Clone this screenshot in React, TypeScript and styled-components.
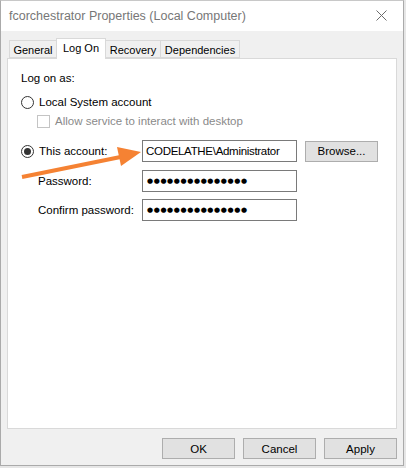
import React, {FC} from 'react';
import styled, {createGlobalStyle} from 'styled-components';

const GlobalStyle = createGlobalStyle`
    html, body {
        margin: 0;
        padding: 0;
        background: #e6e6e6;
    }
    body {
        font-family: "Liberation Sans", Arial, sans-serif;
        font-size: 11px;
        color: #000;
    }
`;

interface TabInfo {
    label: string;
    width: number;
}

const tabs: TabInfo[] = [
    {label: 'General', width: 48},
    {label: 'Log On', width: 50},
    {label: 'Recovery', width: 56},
    {label: 'Dependencies', width: 80},
];

const ACTIVE_TAB = 'Log On';

const Window = styled.div`
    position: relative;
    width: 404px;
    height: 466px;
    box-sizing: border-box;
    border: 1px solid #aaaaaa;
    border-top-color: #c8c8c8;
    background: #f0f0f0;
    display: flex;
    flex-direction: column;
`;

const TitleBar = styled.div`
    height: 30px;
    background: #fff;
    display: flex;
    align-items: center;
    justify-content: space-between;
    padding: 0 8px 0 8px;
    color: #777;
    font-size: 12.5px;
`;

const CloseButton = styled.svg`
    width: 11px;
    height: 11px;
    margin-right: 8px;
    margin-top: -1px;
`;

const Body = styled.div`
    flex: 1;
    padding: 7px 6px 0 6px;
    display: flex;
    flex-direction: column;
`;

const TabStrip = styled.div`
    display: flex;
    align-items: flex-end;
    height: 20px;
    padding-left: 3px;
`;

const Tab = styled.div<{ $active?: boolean; $width: number }>`
    position: relative;
    z-index: ${p => (p.$active ? 2 : 1)};
    box-sizing: border-box;
    width: ${p => p.$width}px;
    height: ${p => (p.$active ? 21 : 18)}px;
    margin-bottom: ${p => (p.$active ? -1 : 0)}px;
    margin-left: -1px;
    border: 1px solid #d9d9d9;
    border-bottom: ${p => (p.$active ? 'none' : '1px solid #d9d9d9')};
    background: ${p => (p.$active ? '#fff' : '#f0f0f0')};
    display: flex;
    align-items: ${p => (p.$active ? 'flex-start' : 'center')};
    justify-content: center;
    padding-top: ${p => (p.$active ? 3 : 1)}px;
    font-size: 11px;
    white-space: nowrap;
`;

const Panel = styled.div`
    position: relative;
    z-index: 1;
    height: 371px;
    box-sizing: border-box;
    background: #fff;
    border: 1px solid #d9d9d9;
    padding: 12px 0 0 13px;
    display: flex;
    flex-direction: column;
`;

const Heading = styled.div`
    height: 14px;
    line-height: 14px;
    font-size: 11.5px;
`;

const OptionRow = styled.label<{ $indent?: number; $top: number; $disabled?: boolean }>`
    display: flex;
    align-items: center;
    gap: 5px;
    height: 16px;
    margin-top: ${p => p.$top}px;
    padding-left: ${p => p.$indent ?? 0}px;
    color: ${p => (p.$disabled ? '#8a8a8a' : '#000')};
    font-size: 11.5px;
`;

const Radio = styled.span<{ $checked?: boolean }>`
    width: 13px;
    height: 13px;
    box-sizing: border-box;
    border: 1px solid #333;
    border-radius: 50%;
    background: #fff;
    display: flex;
    align-items: center;
    justify-content: center;
    flex-shrink: 0;

    &::after {
        content: '';
        display: ${p => (p.$checked ? 'block' : 'none')};
        width: 7px;
        height: 7px;
        border-radius: 50%;
        background: #333;
    }
`;

const CheckBox = styled.span`
    width: 13px;
    height: 13px;
    box-sizing: border-box;
    border: 1px solid #c4c4c4;
    background: #fff;
    flex-shrink: 0;
`;

const AccountGrid = styled.div`
    display: grid;
    grid-template-columns: 113px 155px 73px;
    grid-template-rows: 22px 22px 22px;
    column-gap: 8px;
    row-gap: 7.5px;
    margin-top: 11px;
    align-items: center;
    font-size: 11.5px;
`;

const FieldLabel = styled.div<{ $indent?: number }>`
    display: flex;
    align-items: center;
    gap: 5px;
    padding-left: ${p => p.$indent ?? 0}px;
`;

const TextBox = styled.div<{ $secret?: boolean }>`
    height: 22px;
    box-sizing: border-box;
    border: 1px solid #7a7a7a;
    background: #fff;
    display: flex;
    align-items: center;
    padding-left: ${p => (p.$secret ? 4 : 3)}px;
    font-family: ${p => (p.$secret ? '"DejaVu Sans", sans-serif' : 'inherit')};
    font-size: ${p => (p.$secret ? '7px' : '11.5px')};
    letter-spacing: ${p => (p.$secret ? '0.6px' : '-0.3px')};
    white-space: nowrap;
    overflow: hidden;
`;

const Button = styled.button`
    width: 73px;
    height: 21px;
    box-sizing: border-box;
    border: 1px solid #adadad;
    background: #e1e1e1;
    font-family: "Liberation Sans", Arial, sans-serif;
    font-size: 11.5px;
    color: #000;
    padding: 0;
`;

const Footer = styled.div`
    display: flex;
    justify-content: flex-end;
    gap: 8px;
    margin-top: 9px;
`;

const Arrow = styled.svg`
    position: absolute;
    left: 0;
    top: 0;
    width: 404px;
    height: 466px;
    z-index: 3;
    pointer-events: none;
`;

const dots = '\u25CF'.repeat(15);

const App: FC = () => {
    return (
        <>
            <GlobalStyle />
            <Window>
                <TitleBar>
                    <span>fcorchestrator Properties (Local Computer)</span>
                    <CloseButton viewBox="0 0 11 11">
                        <path d="M0.5 0.5 L10.5 10.5 M10.5 0.5 L0.5 10.5" stroke="#6b6b6b" strokeWidth="1" fill="none" />
                    </CloseButton>
                </TitleBar>
                <Body>
                    <TabStrip>
                        {tabs.map(tab => (
                            <Tab key={tab.label} $width={tab.width} $active={tab.label === ACTIVE_TAB}>
                                {tab.label}
                            </Tab>
                        ))}
                    </TabStrip>
                    <Panel>
                        <Heading>Log on as:</Heading>
                        <OptionRow $top={9}>
                            <Radio />
                            Local System account
                        </OptionRow>
                        <OptionRow $top={3} $indent={16} $disabled>
                            <CheckBox />
                            Allow service to interact with desktop
                        </OptionRow>
                        <AccountGrid>
                            <FieldLabel>
                                <Radio $checked />
                                This account:
                            </FieldLabel>
                            <TextBox>CODELATHE\Administrator</TextBox>
                            <Button>Browse...</Button>
                            <FieldLabel $indent={17}>Password:</FieldLabel>
                            <TextBox $secret>{dots}</TextBox>
                            <span />
                            <FieldLabel $indent={17}>Confirm password:</FieldLabel>
                            <TextBox $secret>{dots}</TextBox>
                            <span />
                        </AccountGrid>
                    </Panel>
                    <Footer>
                        <Button>OK</Button>
                        <Button>Cancel</Button>
                        <Button>Apply</Button>
                    </Footer>
                </Body>
                <Arrow viewBox="0 0 404 466">
                    <line x1="21" y1="176" x2="122" y2="155.5" stroke="#f58233" strokeWidth="4" />
                    <polygon points="140,151 116,146 120,165" fill="#f58233" />
                </Arrow>
            </Window>
        </>
    );
};

export default App;
